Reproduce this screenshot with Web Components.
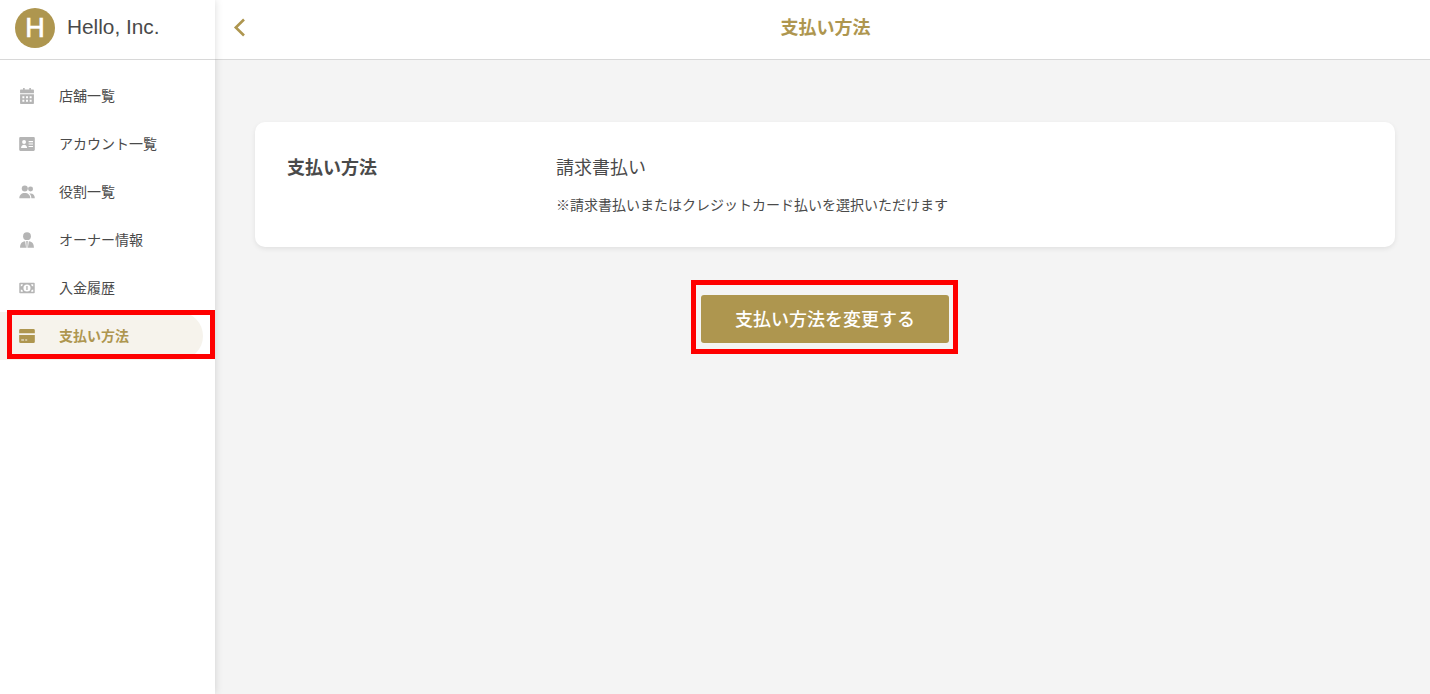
<!DOCTYPE html>
<html lang="ja">
<head>
<meta charset="utf-8">
<title>支払い方法</title>
<style>
  html, body { margin: 0; height: 100%; background: #f4f4f4; }
  body { font-family: "Noto Sans CJK JP", "Liberation Sans", sans-serif; color: #4a4a4a; overflow: hidden; }
</style>
</head>
<body>
<app-shell>
  <side-bar slot="side">
    <nav-item label="店舗一覧" icon="calendar"></nav-item>
    <nav-item label="アカウント一覧" icon="idcard"></nav-item>
    <nav-item label="役割一覧" icon="people"></nav-item>
    <nav-item label="オーナー情報" icon="owner"></nav-item>
    <nav-item label="入金履歴" icon="money"></nav-item>
    <nav-item label="支払い方法" icon="card" active marked></nav-item>
  </side-bar>
  <top-bar slot="top">支払い方法</top-bar>
  <info-card label="支払い方法" value="請求書払い">※請求書払いまたはクレジットカード払いを選択いただけます</info-card>
  <gold-button>支払い方法を変更する</gold-button>
</app-shell>

<script>
const ICONS = {
  calendar: '<path d="M4.600 0h1.800v3H4.600zM11.600 0h1.800v3h-1.800z"/><path fill-rule="evenodd" d="M2 1.600h14a.8.8 0 0 1 .8.8V6H1.200V2.400a.8.8 0 0 1 .8-.8zM1.200 7h15.600v10.200a.8.8 0 0 1-.8.8H2a.8.8 0 0 1-.8-.8zM3.800 9.200v2.200h2.200V9.200zm4.100 0v2.200h2.200V9.200zm4.100 0v2.200h2.200V9.200zM3.800 13.200v2.200h2.200v-2.200zm4.100 0v2.200h2.200v-2.200zm4.100 0v2.200h2.200v-2.200z"/>',
  idcard: '<path fill-rule="evenodd" d="M1.500 1.200h15a1.300 1.300 0 0 1 1.300 1.300v13a1.300 1.300 0 0 1-1.300 1.300h-15a1.300 1.300 0 0 1-1.300-1.300v-13a1.300 1.300 0 0 1 1.300-1.300zM5.700 4.600a2.200 2.200 0 1 0 0 4.400 2.200 2.200 0 0 0 0-4.400zM2.300 13.400h6.800c0-2-1.400-3.500-3.400-3.500s-3.400 1.500-3.400 3.500zM10.800 5.600v1.300h5V5.600zm0 2.800v1.300h5V8.400zm0 2.800v1.300h5v-1.300z"/>',
  people: '<circle cx="6.500" cy="5" r="3.400"/><circle cx="13" cy="5.500" r="2.800"/><path d="M.3 16c0-3.800 2.600-6 6.200-6s6.200 2.200 6.200 6z"/><path d="M13.900 16h3.900c0-3.400-1.900-5.400-4.800-5.400-.6 0-1.100.1-1.500.2 1.500 1.100 2.400 3 2.400 5.200z"/>',
  owner: '<circle cx="9" cy="4.700" r="4.400"/><path d="M1.200 17.600c0-4.200 1.500-6.600 5.700-7.300l1.100 7.300zM16.800 17.600c0-4.200-1.500-6.600-5.700-7.300L10 17.600zM8.100 10h1.800l-.4 7.600h-1z"/>',
  money: '<path fill-rule="evenodd" d="M1.200 3h15.600a.9.900 0 0 1 .9.900v10.200a.9.900 0 0 1-.9.900H1.200a.9.900 0 0 1-.9-.9V3.900a.9.900 0 0 1 .9-.9zM9 5a4 4 0 1 0 0 8 4 4 0 0 0 0-8zM2 4.800v2.400a2.400 2.400 0 0 0 2.400-2.400zm11.600 0A2.400 2.400 0 0 0 16 7.200V4.800zM2 10.800v2.400h2.400A2.400 2.400 0 0 0 2 10.800zm14 0a2.400 2.400 0 0 0-2.400 2.400H16z"/><path d="M8.200 6.800h1.500v4.400H8.200z"/>',
  card: '<path fill-rule="evenodd" d="M1.700 1h14.600a1.500 1.500 0 0 1 1.500 1.500V6H.2V2.500A1.500 1.500 0 0 1 1.700 1zM.2 8h17.600v7.500a1.500 1.500 0 0 1-1.500 1.500H1.700a1.500 1.500 0 0 1-1.500-1.500zm2.300 5v1h3.200v-1zm4.500 0v1h2.200v-1z"/>'
};

class AppShell extends HTMLElement {
  constructor() {
    super();
    this.attachShadow({ mode: 'open' }).innerHTML = `
    <style>
      :host { display: grid; grid-template-columns: 215px 1fr; height: 694px; }
      main { display: flex; flex-direction: column; align-items: center; padding: 62px 35px 0 40px; }
      .col { display: flex; flex-direction: column; min-width: 0; }
      ::slotted(side-bar) { grid-row: 1; }
    </style>
    <slot name="side"></slot>
    <div class="col">
      <slot name="top"></slot>
      <main><slot></slot></main>
    </div>`;
  }
}

class SideBar extends HTMLElement {
  constructor() {
    super();
    this.attachShadow({ mode: 'open' }).innerHTML = `
    <style>
      :host { display: block; background: #fff; box-shadow: 0 0 8px rgba(0,0,0,.15); position: relative; z-index: 2; }
      header { height: 56px; padding: 0 0 3px 15px; border-bottom: 1px solid #d8d8d8; display: flex; align-items: center; gap: 12px; }
      .logo { width: 40px; height: 40px; border-radius: 50%; background: #ae964f; color: #fff; display: flex; align-items: center; justify-content: center;
        font: 27px "Liberation Sans", sans-serif; -webkit-text-stroke: .7px #fff; }
      .name { font: 20.800px "Liberation Sans", sans-serif; color: #4a4a4a; margin-bottom: 2px; }
      nav { display: flex; flex-direction: column; padding-top: 12px; }
    </style>
    <header><span class="logo">H</span><span class="name">Hello, Inc.</span></header>
    <nav><slot></slot></nav>`;
  }
}

class NavItem extends HTMLElement {
  connectedCallback() {
    if (this.shadowRoot) return;
    this.attachShadow({ mode: 'open' }).innerHTML = `
    <style>
      :host { display: block; height: 48px; position: relative; }
      .row { height: 48px; margin-right: 12px; display: flex; align-items: center; padding-left: 19px; gap: 24px; box-sizing: border-box;
        font-size: 14px; color: #4a4a4a; border-radius: 0 24px 24px 0; }
      .row span { margin-bottom: 2px; }
      svg { width: 16px; height: 16px; fill: #b5b5b5; flex: none; }
      :host([active]) .row { background: #f6f3ec; color: #ae964f; font-weight: 700; }
      :host([active]) svg { fill: #ae964f; }
      .mark { position: absolute; left: 7px; top: -2px; width: 208px; height: 49px; border: 5px solid #fe0000; box-sizing: border-box; }
    </style>
    <div class="row">
      <svg viewBox="0 0 18 18">${ICONS[this.getAttribute('icon')]}</svg>
      <span>${this.getAttribute('label')}</span>
    </div>
    ${this.hasAttribute('marked') ? '<div class="mark"></div>' : ''}`;
  }
}

class TopBar extends HTMLElement {
  constructor() {
    super();
    this.attachShadow({ mode: 'open' }).innerHTML = `
    <style>
      :host { display: block; background: #fff; }
      .bar { height: 52px; padding: 0 0 7px 6px; border-bottom: 1px solid #d8d8d8; display: flex; align-items: center; justify-content: center; position: relative;
        color: #ae964f; font-size: 18px; font-weight: 700; }
      svg { position: absolute; left: 18px; top: 18px; width: 14px; height: 20px; fill: none; stroke: #ae964f; stroke-width: 2.600; }
    </style>
    <div class="bar">
      <svg viewBox="0 0 14 20"><path d="M11 1.500 2.800 9.500 11 17.500"/></svg>
      <slot></slot>
    </div>`;
  }
}

class InfoCard extends HTMLElement {
  connectedCallback() {
    if (this.shadowRoot) return;
    this.attachShadow({ mode: 'open' }).innerHTML = `
    <style>
      :host { display: block; align-self: stretch; }
      .card { background: #fff; border-radius: 10px; box-shadow: 0 2px 5px rgba(0,0,0,.08); height: 125px; box-sizing: border-box; padding: 31px 32px 0;
        display: grid; grid-template-columns: 269px 1fr; color: #4a4a4a; }
      .label { font-size: 18px; font-weight: 700; line-height: 27px; }
      .value { font-size: 18px; line-height: 27px; }
      .note { font-size: 14px; line-height: 20px; margin-top: 14px; }
    </style>
    <div class="card">
      <div class="label">${this.getAttribute('label')}</div>
      <div>
        <div class="value">${this.getAttribute('value')}</div>
        <div class="note"><slot></slot></div>
      </div>
    </div>`;
  }
}

class GoldButton extends HTMLElement {
  constructor() {
    super();
    this.attachShadow({ mode: 'open' }).innerHTML = `
    <style>
      :host { display: block; position: relative; margin-top: 48px; }
      button { display: block; width: 248px; height: 48px; border: 0; border-radius: 3px; background: #ae964f; color: #fff; padding: 0 0 2px;
        font: 500 18px "Noto Sans CJK JP", sans-serif; }
      .mark { position: absolute; left: -10px; top: -15px; width: 267px; height: 74px; border: 5px solid #fe0000; box-sizing: border-box; }
    </style>
    <button><slot></slot></button>
    <div class="mark"></div>`;
  }
}

customElements.define('app-shell', AppShell);
customElements.define('side-bar', SideBar);
customElements.define('nav-item', NavItem);
customElements.define('top-bar', TopBar);
customElements.define('info-card', InfoCard);
customElements.define('gold-button', GoldButton);
</script>
</body>
</html>
